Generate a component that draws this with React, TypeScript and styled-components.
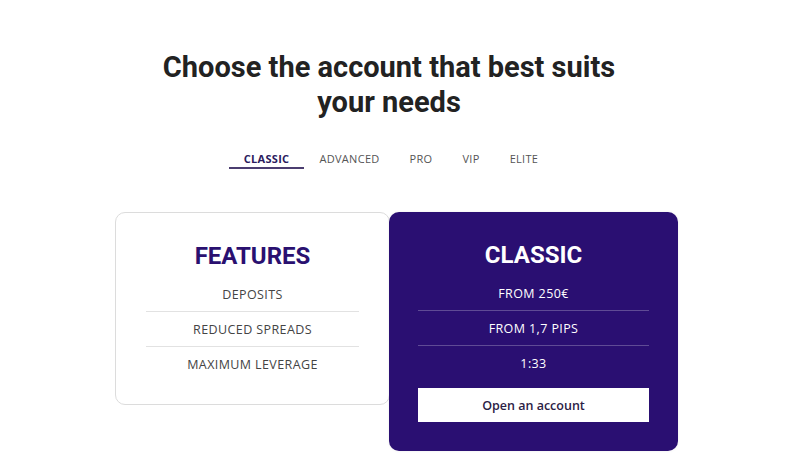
import React, { useState } from "react";
import styled, { createGlobalStyle } from "styled-components";

const Global = createGlobalStyle`
  html, body { margin: 0; padding: 0; background: #fff; }
  body { font-family: "Open Sans", "Liberation Sans", sans-serif; color: #222; }
`;

const Page = styled.div`
  width: 800px;
  height: 467px;
  overflow: hidden;
  display: flex;
  flex-direction: column;
  align-items: center;
  padding-top: 50px;
  box-sizing: border-box;
`;

const Title = styled.h1`
  margin: 0 22px 0 0;
  font-family: Roboto, "Liberation Sans", sans-serif;
  font-weight: 700;
  font-size: 29px;
  line-height: 35px;
  color: #222;
  text-align: center;
  width: 480px;
`;

const Tabs = styled.div`
  display: flex;
  margin: 31px 18px 0 0;
`;

const Tab = styled.button<{ $active?: boolean }>`
  border: none;
  background: none;
  cursor: pointer;
  padding: 0 15px 0;
  font-family: "Open Sans", "Liberation Sans", sans-serif;
  font-size: 11px;
  letter-spacing: 0.3px;
  font-weight: ${(p) => (p.$active ? 700 : 400)};
  color: ${(p) => (p.$active ? "#2b1b5e" : "#555")};
  border-bottom: 2px solid ${(p) => (p.$active ? "#4b3d70" : "transparent")};
  line-height: 16px;
`;

const Cards = styled.div`
  display: flex;
  align-items: flex-start;
  margin-top: 43px;
  margin-right: 7px;
`;

const FeatureCard = styled.div`
  width: 275px;
  height: 193px;
  box-sizing: border-box;
  border: 1px solid #dcdcdc;
  border-radius: 10px;
  padding: 24px 30px 0;
  margin-right: -1px;
  background: #fff;
`;

const PlanCard = styled.div`
  width: 289px;
  height: 239px;
  box-sizing: border-box;
  background: #2a0f72;
  border-radius: 10px;
  padding: 24px 29px 0;
  color: #fff;
  position: relative;
  box-shadow: 0 0 3px rgba(0, 0, 0, 0.08);
`;

const CardHeading = styled.h2<{ $light?: boolean }>`
  margin: 0 0 2px;
  text-align: center;
  font-family: Roboto, "Liberation Sans", sans-serif;
  font-weight: 700;
  font-size: 24px;
  line-height: 38px;
  color: ${(p) => (p.$light ? "#fff" : "#2a1070")};
`;

const Row = styled.div<{ $light?: boolean }>`
  height: 34px;
  display: flex;
  align-items: center;
  justify-content: center;
  font-size: 12.5px;
  letter-spacing: 0.4px;
  color: ${(p) => (p.$light ? "#fff" : "#444")};
  &:not(:first-of-type) {
    border-top: 1px solid ${(p) => (p.$light ? "rgba(255,255,255,0.25)" : "#e2e2e2")};
  }
`;

const OpenButton = styled.button`
  display: block;
  width: 100%;
  height: 34px;
  margin-top: 8px;
  border: none;
  background: #fff;
  color: #2b2145;
  font-family: "Open Sans", "Liberation Sans", sans-serif;
  font-weight: 600;
  font-size: 12.5px;
  cursor: pointer;
`;

const tabs = ["CLASSIC", "ADVANCED", "PRO", "VIP", "ELITE"];

export default function App() {
  const [active, setActive] = useState("CLASSIC");
  return (
    <>
      <Global />
      <Page>
        <Title>Choose the account that best suits your needs</Title>
        <Tabs>
          {tabs.map((t) => (
            <Tab key={t} $active={t === active} onClick={() => setActive(t)}>
              {t}
            </Tab>
          ))}
        </Tabs>
        <Cards>
          <FeatureCard>
            <CardHeading>FEATURES</CardHeading>
            <Row>DEPOSITS</Row>
            <Row>REDUCED SPREADS</Row>
            <Row>MAXIMUM LEVERAGE</Row>
          </FeatureCard>
          <PlanCard>
            <CardHeading $light>CLASSIC</CardHeading>
            <Row $light>FROM 250€</Row>
            <Row $light>FROM 1,7 PIPS</Row>
            <Row $light>1:33</Row>
            <OpenButton>Open an account</OpenButton>
          </PlanCard>
        </Cards>
      </Page>
    </>
  );
}
